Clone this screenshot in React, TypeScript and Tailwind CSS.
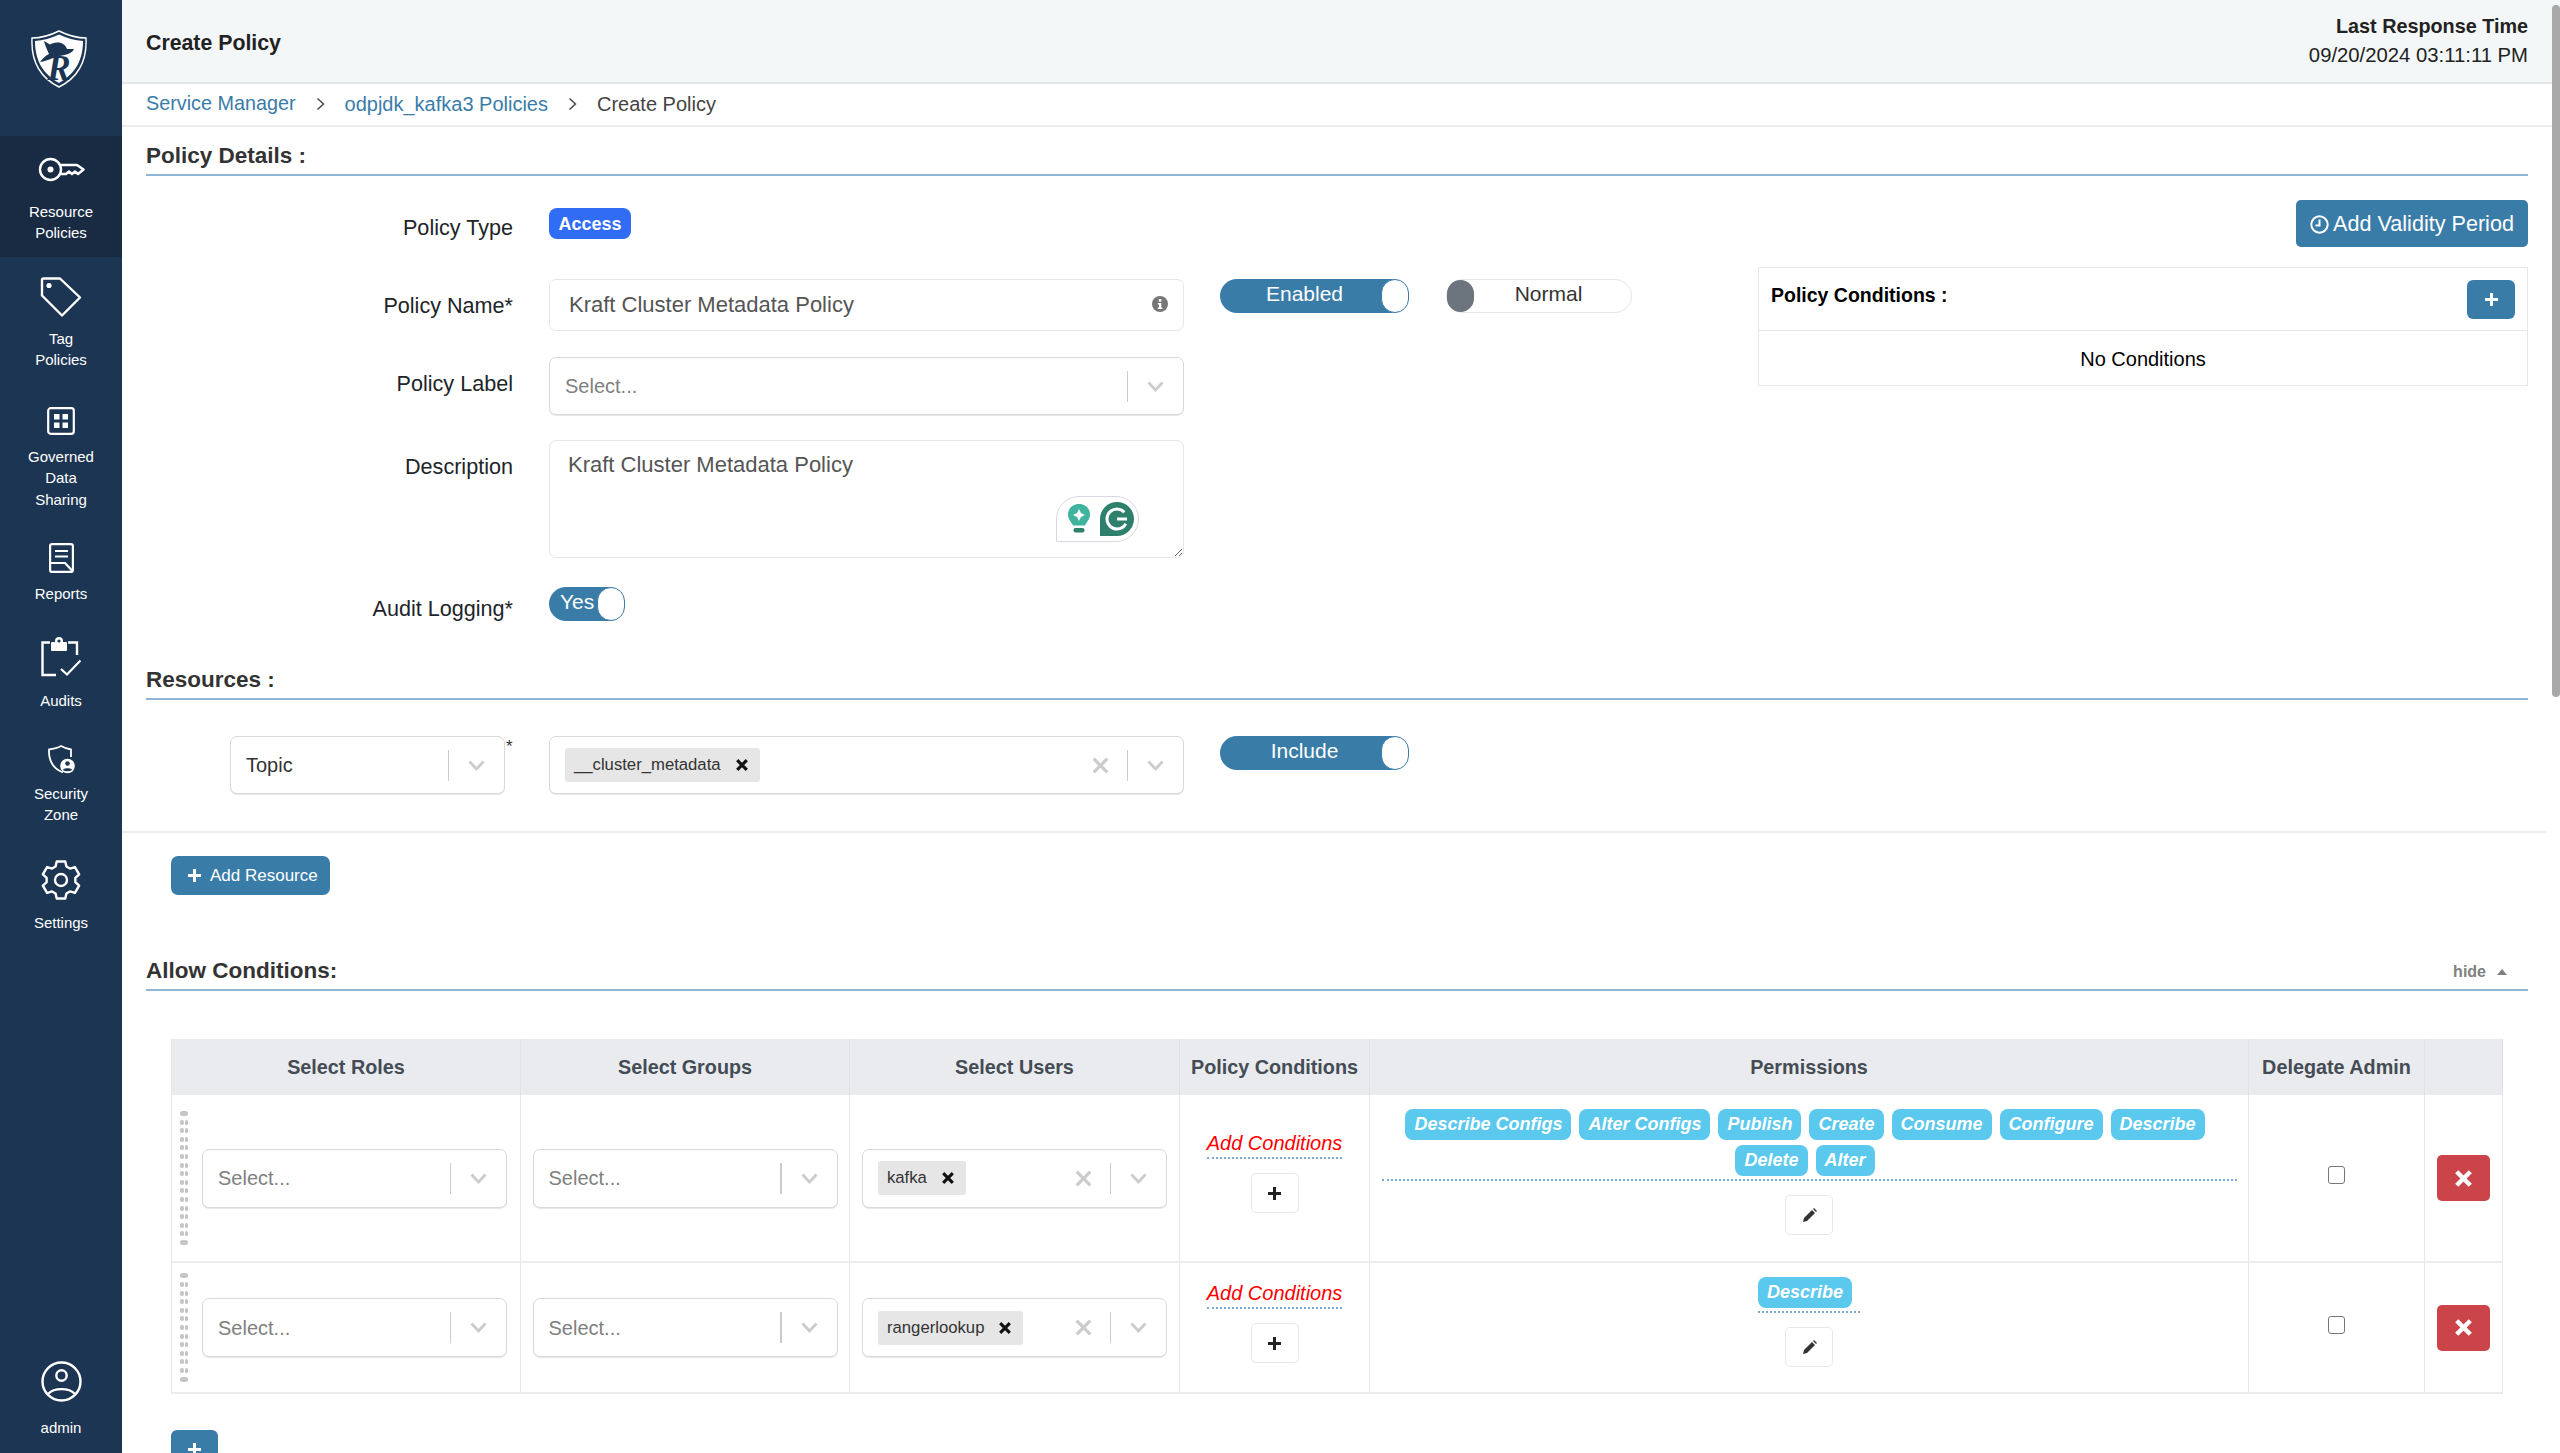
import type { ReactNode } from "react";

const gearPoints = Array.from({ length: 6 })
  .flatMap((_, i) => {
    const a = i * 60 - 90;
    return [
      [14.5, a - 22],
      [19, a - 13],
      [19, a + 13],
      [14.5, a + 22],
    ];
  })
  .map(([r, deg]) => {
    const rad = (deg * Math.PI) / 180;
    return `${(20 + r * Math.cos(rad)).toFixed(2)},${(20 + r * Math.sin(rad)).toFixed(2)}`;
  })
  .join(" ");

function Logo() {
  return (
    <svg width="56" height="58" viewBox="0 0 56 58">
      <path d="M28 1C36 5 46 8 55 8C56 28 50 46 28 57C6 46 0 28 1 8C10 8 20 5 28 1Z" fill="none" stroke="#fff" strokeWidth="1.4" />
      <path d="M28 4.5C36 8 44 10.5 52 11C52 28 46 43 28 53C10 43 4 28 4 11C12 10.5 20 8 28 4.5Z" fill="#fff" />
      <path d="M13 11L19 14.5C23 12.5 27 12 30 13C33 14 35 16 36 19L43 19C40 26 30 24.5 22 28C17 30 13 31.5 9 32C12 28 15 25.5 18 24C16 20 14 15 13 11Z" fill="#1c3552" />
      <text x="28" y="50" textAnchor="middle" fontSize="35" fontWeight="bold" fontStyle="italic" fontFamily="Liberation Serif, serif" fill="#1c3552">
        R
      </text>
    </svg>
  );
}

function KeyIcon() {
  return (
    <svg width="47" height="25" viewBox="0 0 47 25" fill="none" stroke="#fff" strokeWidth="2.4" strokeLinejoin="round">
      <circle cx="12.5" cy="12.5" r="10.5" />
      <circle cx="12.5" cy="12.5" r="3" fill="#fff" stroke="none" />
      <path d="M23 8H39L45.5 12.5L40 17L37 14.5L34 17L31 14.5L28 17H23" />
    </svg>
  );
}

function TagIcon() {
  return (
    <svg width="42" height="40" viewBox="0 0 42 40" fill="none" stroke="#fff" strokeWidth="2.4" strokeLinejoin="round">
      <path d="M3.5 1.5H20L40 20.5L22 38.5L2 18.5V3Q2 1.5 3.5 1.5Z" />
      <circle cx="9" cy="8.5" r="2.6" fill="#fff" stroke="none" />
    </svg>
  );
}

function GovernedIcon() {
  return (
    <svg width="28" height="28" viewBox="0 0 28 28" fill="none">
      <rect x="1.2" y="1.2" width="25.6" height="25.6" rx="2.5" stroke="#fff" strokeWidth="2.2" />
      <rect x="7" y="7" width="5.5" height="5.5" fill="#fff" />
      <rect x="15.5" y="7" width="5.5" height="5.5" fill="#fff" />
      <rect x="7" y="15.5" width="5.5" height="5.5" fill="#fff" />
      <rect x="15.5" y="15.5" width="5.5" height="5.5" fill="#fff" />
    </svg>
  );
}

function ReportsIcon() {
  return (
    <svg width="25" height="30" viewBox="0 0 25 30" fill="none" stroke="#fff" strokeWidth="2.2">
      <rect x="1.1" y="1.1" width="22.8" height="27.8" rx="2" />
      <path d="M6 8H19M6 13.5H19M1 20H16L23.5 28" />
    </svg>
  );
}

function AuditsIcon() {
  return (
    <svg width="40" height="40" viewBox="0 0 40 40" fill="none" stroke="#fff" strokeWidth="2.4">
      <path d="M9 5.5H1.5V38H15M27 5.5H36V18" />
      <rect x="10" y="5" width="16" height="9" rx="1" fill="#fff" stroke="none" />
      <circle cx="18" cy="4" r="4" fill="#fff" stroke="none" />
      <circle cx="18" cy="4" r="1.6" fill="#1c3552" stroke="none" />
      <path d="M20 32L26 37.5L39.5 23.5" strokeWidth="2.2" />
    </svg>
  );
}

function SecurityIcon() {
  return (
    <svg width="28" height="29" viewBox="0 0 28 29" fill="none">
      <path d="M24 12V4.5C20.5 4 17.5 3 14 1C10.5 3 6 4 2 4.5C1.5 17 7 24 16 27.5" stroke="#fff" strokeWidth="1.8" strokeLinejoin="round" />
      <circle cx="20.5" cy="21" r="7.3" fill="#fff" />
      <circle cx="20.5" cy="18.5" r="2.3" fill="#1c3552" />
      <path d="M15.8 25C16.5 22.5 24.5 22.5 25.2 25Q20.5 27.5 15.8 25Z" fill="#1c3552" />
    </svg>
  );
}

function SettingsIcon() {
  return (
    <svg width="40" height="40" viewBox="0 0 40 40" fill="none" stroke="#fff" strokeWidth="2.4" strokeLinejoin="round">
      <polygon points={gearPoints} />
      <circle cx="20" cy="20" r="6" />
    </svg>
  );
}

function UserIcon() {
  return (
    <svg width="41" height="41" viewBox="0 0 41 41" fill="none" stroke="#fff" strokeWidth="2.4">
      <circle cx="20.5" cy="20.5" r="19" />
      <circle cx="20.5" cy="14.5" r="5.2" />
      <path d="M7 33C13 26.5 28 26.5 34 33" />
    </svg>
  );
}

function NavItem({ className, icon, lines }: { className: string; icon: ReactNode; lines: string[] }) {
  return (
    <div className={`flex flex-col items-center text-[15px] leading-[21.5px] text-white ${className}`}>
      {icon}
      <div className="pt-[0.5px] text-center">
        {lines.map((line) => (
          <div key={line}>{line}</div>
        ))}
      </div>
    </div>
  );
}

function Sidebar() {
  return (
    <div className="flex h-full w-[122px] shrink-0 flex-col bg-[#1c3552]">
      <div className="flex h-[136px] justify-center pr-[5px] pt-[30px]">
        <Logo />
      </div>
      <NavItem className="h-[121px] bg-[#182b42] pt-[21px] gap-[18px]" icon={<KeyIcon />} lines={["Resource", "Policies"]} />
      <NavItem className="h-[133px] pt-[20px] gap-[10px]" icon={<TagIcon />} lines={["Tag", "Policies"]} />
      <NavItem className="h-[140px] pt-[17px] gap-[10px]" icon={<GovernedIcon />} lines={["Governed", "Data", "Sharing"]} />
      <NavItem className="h-[90px] pt-[13px] gap-[9px]" icon={<ReportsIcon />} lines={["Reports"]} />
      <NavItem className="h-[110px] pt-[17px] gap-[12px]" icon={<AuditsIcon />} lines={["Audits"]} />
      <NavItem className="h-[110px] pt-[15px] gap-[8px]" icon={<SecurityIcon />} lines={["Security", "Zone"]} />
      <NavItem className="pt-[20px] gap-[11px]" icon={<SettingsIcon />} lines={["Settings"]} />
      <NavItem className="mt-auto pb-[15px] gap-[14.5px]" icon={<UserIcon />} lines={["admin"]} />
    </div>
  );
}

function Chevron() {
  return (
    <svg width="17" height="11" viewBox="0 0 17 11" fill="none" stroke="#cccccc" strokeWidth="2.8">
      <path d="M1.5 1.5L8.5 9L15.5 1.5" />
    </svg>
  );
}

function Cross({ size = 12, color = "#111", width = 2.6 }: { size?: number; color?: string; width?: number }) {
  return (
    <svg width={size} height={size} viewBox="0 0 10 10" fill="none" stroke={color} strokeWidth={width}>
      <path d="M1 1L9 9M9 1L1 9" />
    </svg>
  );
}

function Plus({ size = 13, color = "#fff" }: { size?: number; color?: string }) {
  return (
    <svg width={size} height={size} viewBox="0 0 13 13" fill={color}>
      <path d="M5 0H8V5H13V8H8V13H5V8H0V5H5Z" />
    </svg>
  );
}

function Pencil() {
  return (
    <svg width="15" height="15" viewBox="0 0 15 15" fill="#333">
      <path d="M1 14L2 10L10 2L13 5L5 13ZM11 1L12 0L15 3L14 4Z" />
    </svg>
  );
}

function Select({
  width,
  height = "h-[59px]",
  placeholder,
  value,
  tag,
}: {
  width: string;
  height?: string;
  placeholder?: string;
  value?: string;
  tag?: string;
}) {
  return (
    <div className={`flex items-center rounded-[7px] border-[1.5px] border-[#d9d9d9] bg-white shadow-[0_1px_0_#e8e8e8] ${width} ${height}`}>
      <div className="flex min-w-0 flex-1 items-center pl-[15px] text-[20px]">
        {placeholder && <span className="text-[#808080]">{placeholder}</span>}
        {value && <span className="text-[#333]">{value}</span>}
        {tag && (
          <span className="flex h-[34px] items-center rounded-[3px] bg-[#e6e6e6] pl-[9px] pr-[12px] text-[16.7px] text-[#333]">
            {tag}
            <span className="ml-[15px]">
              <Cross />
            </span>
          </span>
        )}
      </div>
      {tag && (
        <div className="flex w-[56px] justify-center pl-[3px]">
          <Cross size={17} color="#cccccc" width={1.9} />
        </div>
      )}
      <div className="h-[31px] w-[1.5px] bg-[#cccccc]" />
      <div className="flex w-[55px] justify-center">
        <Chevron />
      </div>
    </div>
  );
}

function Toggle({ label, width = "w-[189px]", on = true }: { label: string; width?: string; on?: boolean }) {
  if (!on) {
    return (
      <div className={`flex h-[34px] items-center rounded-full border-[1.5px] border-[#e6e6e6] bg-white text-[21px] text-[#333] ${width}`}>
        <div className="h-[32px] w-[27px] shrink-0 rounded-full bg-[#6c757d]" />
        <div className="flex-1 pb-[4px] pr-[8px] text-center">{label}</div>
      </div>
    );
  }
  return (
    <div className={`flex h-[34px] items-center rounded-full bg-[#3a7ca8] text-[21px] text-white ${width}`}>
      <div className="flex-1 pb-[4px] pl-[8px] text-center">{label}</div>
      <div className="h-[34px] w-[28px] shrink-0 rounded-full border-[1.5px] border-[#3a7ca8] bg-white" />
    </div>
  );
}

function SectionHeading({ title, children }: { title: string; children?: ReactNode }) {
  return (
    <div className="flex h-[49px] items-start justify-between border-b-2 border-[#8fb6d3] pt-[15px]">
      <div className="text-[22.5px] font-bold leading-[28px] text-[#333]">{title}</div>
      {children}
    </div>
  );
}

function FormRow({ label, labelPad, className, children }: { label: string; labelPad: string; className: string; children: ReactNode }) {
  return (
    <div className={`flex items-start ${className}`}>
      <div className={`w-[367px] shrink-0 text-right text-[21.6px] leading-[24px] text-[#212529] ${labelPad}`}>{label}</div>
      <div className="ml-[36px] flex items-start">{children}</div>
    </div>
  );
}

function Grammarly() {
  return (
    <div className="absolute bottom-[15px] right-[44px] flex h-[46px] w-[83px] items-center rounded-r-[23px] rounded-tl-[23px] border-[1.5px] border-[#d5d8e5] bg-white pl-[10px]">
      <svg width="24" height="32" viewBox="0 0 24 32">
        <path d="M12 1C5.5 1 1 5.5 1 11.5C1 16 4 18.5 6 22.5H18C20 18.5 23 16 23 11.5C23 5.5 18.5 1 12 1Z" fill="#3fb39d" />
        <path d="M12 6L14 10L18 12L14 14L12 18L10 14L6 12L10 10Z" fill="#fff" />
        <rect x="6.5" y="25" width="11" height="4.5" rx="2" fill="#2f7f6d" />
      </svg>
      <svg className="ml-[9px]" width="34" height="34" viewBox="0 0 34 34">
        <path d="M17 0A17 17 0 1 1 17 34H0V17A17 17 0 0 1 17 0Z" fill="#2f7f6d" />
        <circle cx="17" cy="17" r="10" fill="none" stroke="#fff" strokeWidth="3" strokeDasharray="50 13" strokeDashoffset="-5" />
        <path d="M17 17H27" stroke="#fff" strokeWidth="3" />
      </svg>
    </div>
  );
}

function PolicyDetails() {
  return (
    <>
      <SectionHeading title="Policy Details :" />
      <div className="flex items-start">
        <div className="flex-1">
          <FormRow label="Policy Type" labelPad="pt-[8px]" className="mt-[32px]">
            <div className="flex h-[31px] w-[82px] items-center justify-center rounded-[8px] bg-[#316cf4] pt-[1px] text-[18px] font-bold text-white">Access</div>
          </FormRow>
          <FormRow label="Policy Name*" labelPad="pt-[15px]" className="mt-[39px]">
            <div className="flex h-[52px] w-[635px] items-center justify-between rounded-[7px] border-[1.5px] border-[#e6e6e6] pb-[2px] pl-[19px] pr-[15px] text-[22px] text-[#555]">
              Kraft Cluster Metadata Policy
              <svg width="16" height="16" viewBox="0 0 16 16">
                <circle cx="8" cy="8" r="8" fill="#777" />
                <rect x="6.8" y="3" width="2.6" height="2.6" fill="#fff" />
                <path d="M5.8 7H9.3V11.5H10.4V13H5.8V11.5H7V8.5H5.8Z" fill="#fff" />
              </svg>
            </div>
            <div className="ml-[36px]">
              <Toggle label="Enabled" />
            </div>
            <div className="ml-[37px]">
              <Toggle label="Normal" width="w-[186px]" on={false} />
            </div>
          </FormRow>
          <FormRow label="Policy Label" labelPad="pt-[15px]" className="mt-[26px]">
            <Select width="w-[635px]" height="h-[58px]" placeholder="Select..." />
          </FormRow>
          <FormRow label="Description" labelPad="pt-[15px]" className="mt-[25px]">
            <div className="relative h-[118px] w-[635px] resize overflow-auto rounded-[7px] border-[1.5px] border-[#e6e6e6] pl-[18px] pt-[12px] text-[22px] leading-[24px] text-[#555]">
              Kraft Cluster Metadata Policy
              <Grammarly />
            </div>
          </FormRow>
          <FormRow label="Audit Logging*" labelPad="pt-[10px]" className="mt-[29px]">
            <div className="flex h-[34px] w-[76px] items-center rounded-full bg-[#3a7ca8] pl-[11px] text-[21px] text-white">
              <div className="flex-1 pb-[4px]">Yes</div>
              <div className="h-[34px] w-[28px] shrink-0 rounded-full border-[1.5px] border-[#3a7ca8] bg-white" />
            </div>
          </FormRow>
        </div>
        <div className="flex w-[770px] shrink-0 flex-col items-end pt-[24px]">
          <div className="flex h-[47px] w-[232px] items-center justify-center gap-[4px] rounded-[5px] bg-[#3a7ca8] pt-[1px] text-[21.6px] text-white">
            <svg width="19" height="19" viewBox="0 0 19 19" fill="none" stroke="#fff" strokeWidth="2">
              <circle cx="9.5" cy="9.5" r="8.2" />
              <path d="M9.5 4.5V10.5H5.5" />
            </svg>
            Add Validity Period
          </div>
          <div className="mt-[20px] w-full border-[1.5px] border-[#e8e8e8]">
            <div className="flex h-[63px] items-center justify-between border-b-[1.5px] border-[#e8e8e8] pl-[12px] pr-[12px]">
              <div className="pb-[6px] text-[19.5px] font-bold text-black">Policy Conditions :</div>
              <div className="flex h-[39px] w-[48px] items-center justify-center rounded-[6px] bg-[#3a7ca8]">
                <Plus />
              </div>
            </div>
            <div className="flex h-[54px] items-center justify-center pt-[2px] text-[20px] text-black">No Conditions</div>
          </div>
        </div>
      </div>
    </>
  );
}

function Resources() {
  return (
    <>
      <div className="mt-[30px]">
        <SectionHeading title="Resources :" />
      </div>
      <div className="mt-[36px] flex items-start pl-[84px]">
        <Select width="w-[275px]" height="h-[58px]" value="Topic" />
        <div className="w-[44px] pl-[1px] text-[17px] leading-[22px] text-[#333]">*</div>
        <Select width="w-[635px]" height="h-[58px]" tag="__cluster_metadata" />
        <div className="ml-[36px]">
          <Toggle label="Include" />
        </div>
      </div>
      <div className="-mr-[18px] -ml-[24px] mt-[37px] border-b-2 border-[#eeeeee]" />
      <div className="ml-[25px] mt-[23px] flex h-[39px] w-[159px] items-center gap-[9px] rounded-[7px] bg-[#3a7ca8] pl-[17px] text-[17px] text-white">
        <Plus />
        Add Resource
      </div>
    </>
  );
}

const firstPermissions = ["Describe Configs", "Alter Configs", "Publish", "Create", "Consume", "Configure", "Describe", "Delete", "Alter"];

function PermissionTag({ label }: { label: string }) {
  return (
    <span className="mr-[8px] flex h-[31px] items-center rounded-[8px] bg-[#5bc8ee] px-[9px] text-[18px] font-bold italic text-white">{label}</span>
  );
}

function DragHandle({ count }: { count: number }) {
  return (
    <div className="flex w-[8px] shrink-0 flex-col gap-[3.6px]">
      {Array.from({ length: count }).map((_, i) => (
        <div key={i} className="flex h-[5px] justify-between">
          {i === 0 || i === count - 1 ? (
            <span className="h-[5px] w-[8px] rounded-full bg-[#c4c4c4]" />
          ) : (
            <>
              <span className="h-[5px] w-[3.5px] rounded-full bg-[#c4c4c4]" />
              <span className="h-[5px] w-[3.5px] rounded-full bg-[#c4c4c4]" />
            </>
          )}
        </div>
      ))}
    </div>
  );
}

function SquareButton({ children }: { children: ReactNode }) {
  return (
    <div className="flex h-[40px] w-[48px] items-center justify-center rounded-[5px] border-[1.5px] border-[#e8e8e8] bg-white">{children}</div>
  );
}

const headCell = "flex items-center justify-center border-r border-[#dfe1e4] bg-[#e9ebef] pt-[1px] text-[19.8px] font-bold text-[#444c55]";

function ConditionRow({
  height,
  handle,
  users,
  condPad,
  permPad,
  permissions,
  permWidth,
}: {
  height: string;
  handle: number;
  users: string;
  condPad: string;
  permPad: string;
  permissions: string[];
  permWidth: string;
}) {
  const cell = `border-r border-b-2 border-r-[#e8e8e8] border-b-[#ececec] ${height}`;
  return (
    <>
      <div className={`flex items-center pl-[8px] ${cell}`}>
        <DragHandle count={handle} />
        <div className="ml-[14px]">
          <Select width="w-[305px]" placeholder="Select..." />
        </div>
      </div>
      <div className={`flex items-center justify-center ${cell}`}>
        <Select width="w-[305px]" placeholder="Select..." />
      </div>
      <div className={`flex items-center justify-center ${cell}`}>
        <Select width="w-[305px]" tag={users} />
      </div>
      <div className={`flex flex-col items-center ${condPad} ${cell}`}>
        <div className="h-[28px] border-b-2 border-dotted border-[#7aa9d4] text-[20px] italic leading-[24px] text-[#ff0000]">Add Conditions</div>
        <div className="mt-[14px]">
          <SquareButton>
            <Plus size={13} color="#222" />
          </SquareButton>
        </div>
      </div>
      <div className={`flex flex-col items-center ${permPad} ${cell}`}>
        <div className={`flex flex-wrap justify-center gap-y-[5px] border-b-2 border-dotted border-[#7aa9d4] pb-[3px] ${permWidth}`}>
          {permissions.map((label) => (
            <PermissionTag key={label} label={label} />
          ))}
        </div>
        <div className="mt-[14px]">
          <SquareButton>
            <Pencil />
          </SquareButton>
        </div>
      </div>
      <div className={`flex items-center justify-center pb-[6px] ${cell}`}>
        <input type="checkbox" className="h-[18px] w-[17px] appearance-none rounded-[3px] border-[1.5px] border-[#767676] bg-white" />
      </div>
      <div className={`flex items-center justify-center ${cell}`}>
        <div className="flex h-[46px] w-[53px] items-center justify-center rounded-[5px] bg-[#cb444a]">
          <Cross size={17} color="#fff" width={2.6} />
        </div>
      </div>
    </>
  );
}

function AllowConditions() {
  return (
    <>
      <div className="mt-[47px]">
        <SectionHeading title="Allow Conditions:">
          <div className="flex items-center gap-[11px] pr-[21px] pt-[3px] text-[16px] font-bold leading-[24px] text-[#808080]">
            hide
            <svg width="10" height="6" viewBox="0 0 10 6" fill="#808080">
              <path d="M5 0L10 6H0Z" />
            </svg>
          </div>
        </SectionHeading>
      </div>
      <div className="ml-[25px] mt-[48px] grid w-[2332px] grid-cols-[349px_329px_330px_190px_879px_176px_78px] border-l border-[#e8e8e8]">
        {["Select Roles", "Select Groups", "Select Users", "Policy Conditions", "Permissions", "Delegate Admin", ""].map((title, i) => (
          <div key={i} className={`h-[56px] ${headCell}`}>
            {title}
          </div>
        ))}
        <ConditionRow
          height="h-[168px]"
          handle={16}
          users="kafka"
          condPad="pt-[36px]"
          permPad="pt-[14px]"
          permissions={firstPermissions}
          permWidth="w-[855px]"
        />
        <ConditionRow
          height="h-[131px]"
          handle={13}
          users="rangerlookup"
          condPad="pt-[18px]"
          permPad="pt-[14px]"
          permissions={["Describe"]}
          permWidth="w-[102px]"
        />
      </div>
      <div className="ml-[25px] mt-[36px] flex h-[39px] w-[47px] shrink-0 items-center justify-center rounded-[6px] bg-[#3a7ca8]">
        <Plus />
      </div>
    </>
  );
}

export default function App() {
  return (
    <div className="flex h-[1453px] w-[2560px] overflow-hidden bg-white font-['Liberation_Sans',Arial,sans-serif]">
      <Sidebar />
      <div className="relative flex min-w-0 flex-1 flex-col">
        <div className="flex h-[84px] shrink-0 items-center justify-between border-b-2 border-[#e3e6e6] bg-[#f4f7f8] pl-[24px] pr-[32px]">
          <div className="pt-[6px] text-[21.3px] font-bold text-[#222]">Create Policy</div>
          <div className="text-right leading-[29px] text-[#222]">
            <div className="text-[19.8px] font-bold">Last Response Time</div>
            <div className="text-[20.3px]">09/20/2024 03:11:11 PM</div>
          </div>
        </div>
        <div className="flex h-[43px] shrink-0 items-center gap-[20px] border-b-2 border-[#ececec] pb-[1px] pl-[24px] text-[20px] text-[#3a7ca8]">
          <span className="text-[19.8px]">Service Manager</span>
          <svg width="9" height="14" viewBox="0 0 9 14" fill="none" stroke="#444" strokeWidth="1.4">
            <path d="M1.5 1.5L7.5 7L1.5 12.5" />
          </svg>
          <span>odpjdk_kafka3 Policies</span>
          <svg width="9" height="14" viewBox="0 0 9 14" fill="none" stroke="#444" strokeWidth="1.4">
            <path d="M1.5 1.5L7.5 7L1.5 12.5" />
          </svg>
          <span className="text-[#444]">Create Policy</span>
        </div>
        <div className="flex flex-col pl-[24px] pr-[32px]">
          <PolicyDetails />
          <Resources />
          <AllowConditions />
        </div>
        <div className="absolute right-0 top-[5px] h-[692px] w-[8px] rounded-full bg-[#a8a8a8]" />
      </div>
    </div>
  );
}
